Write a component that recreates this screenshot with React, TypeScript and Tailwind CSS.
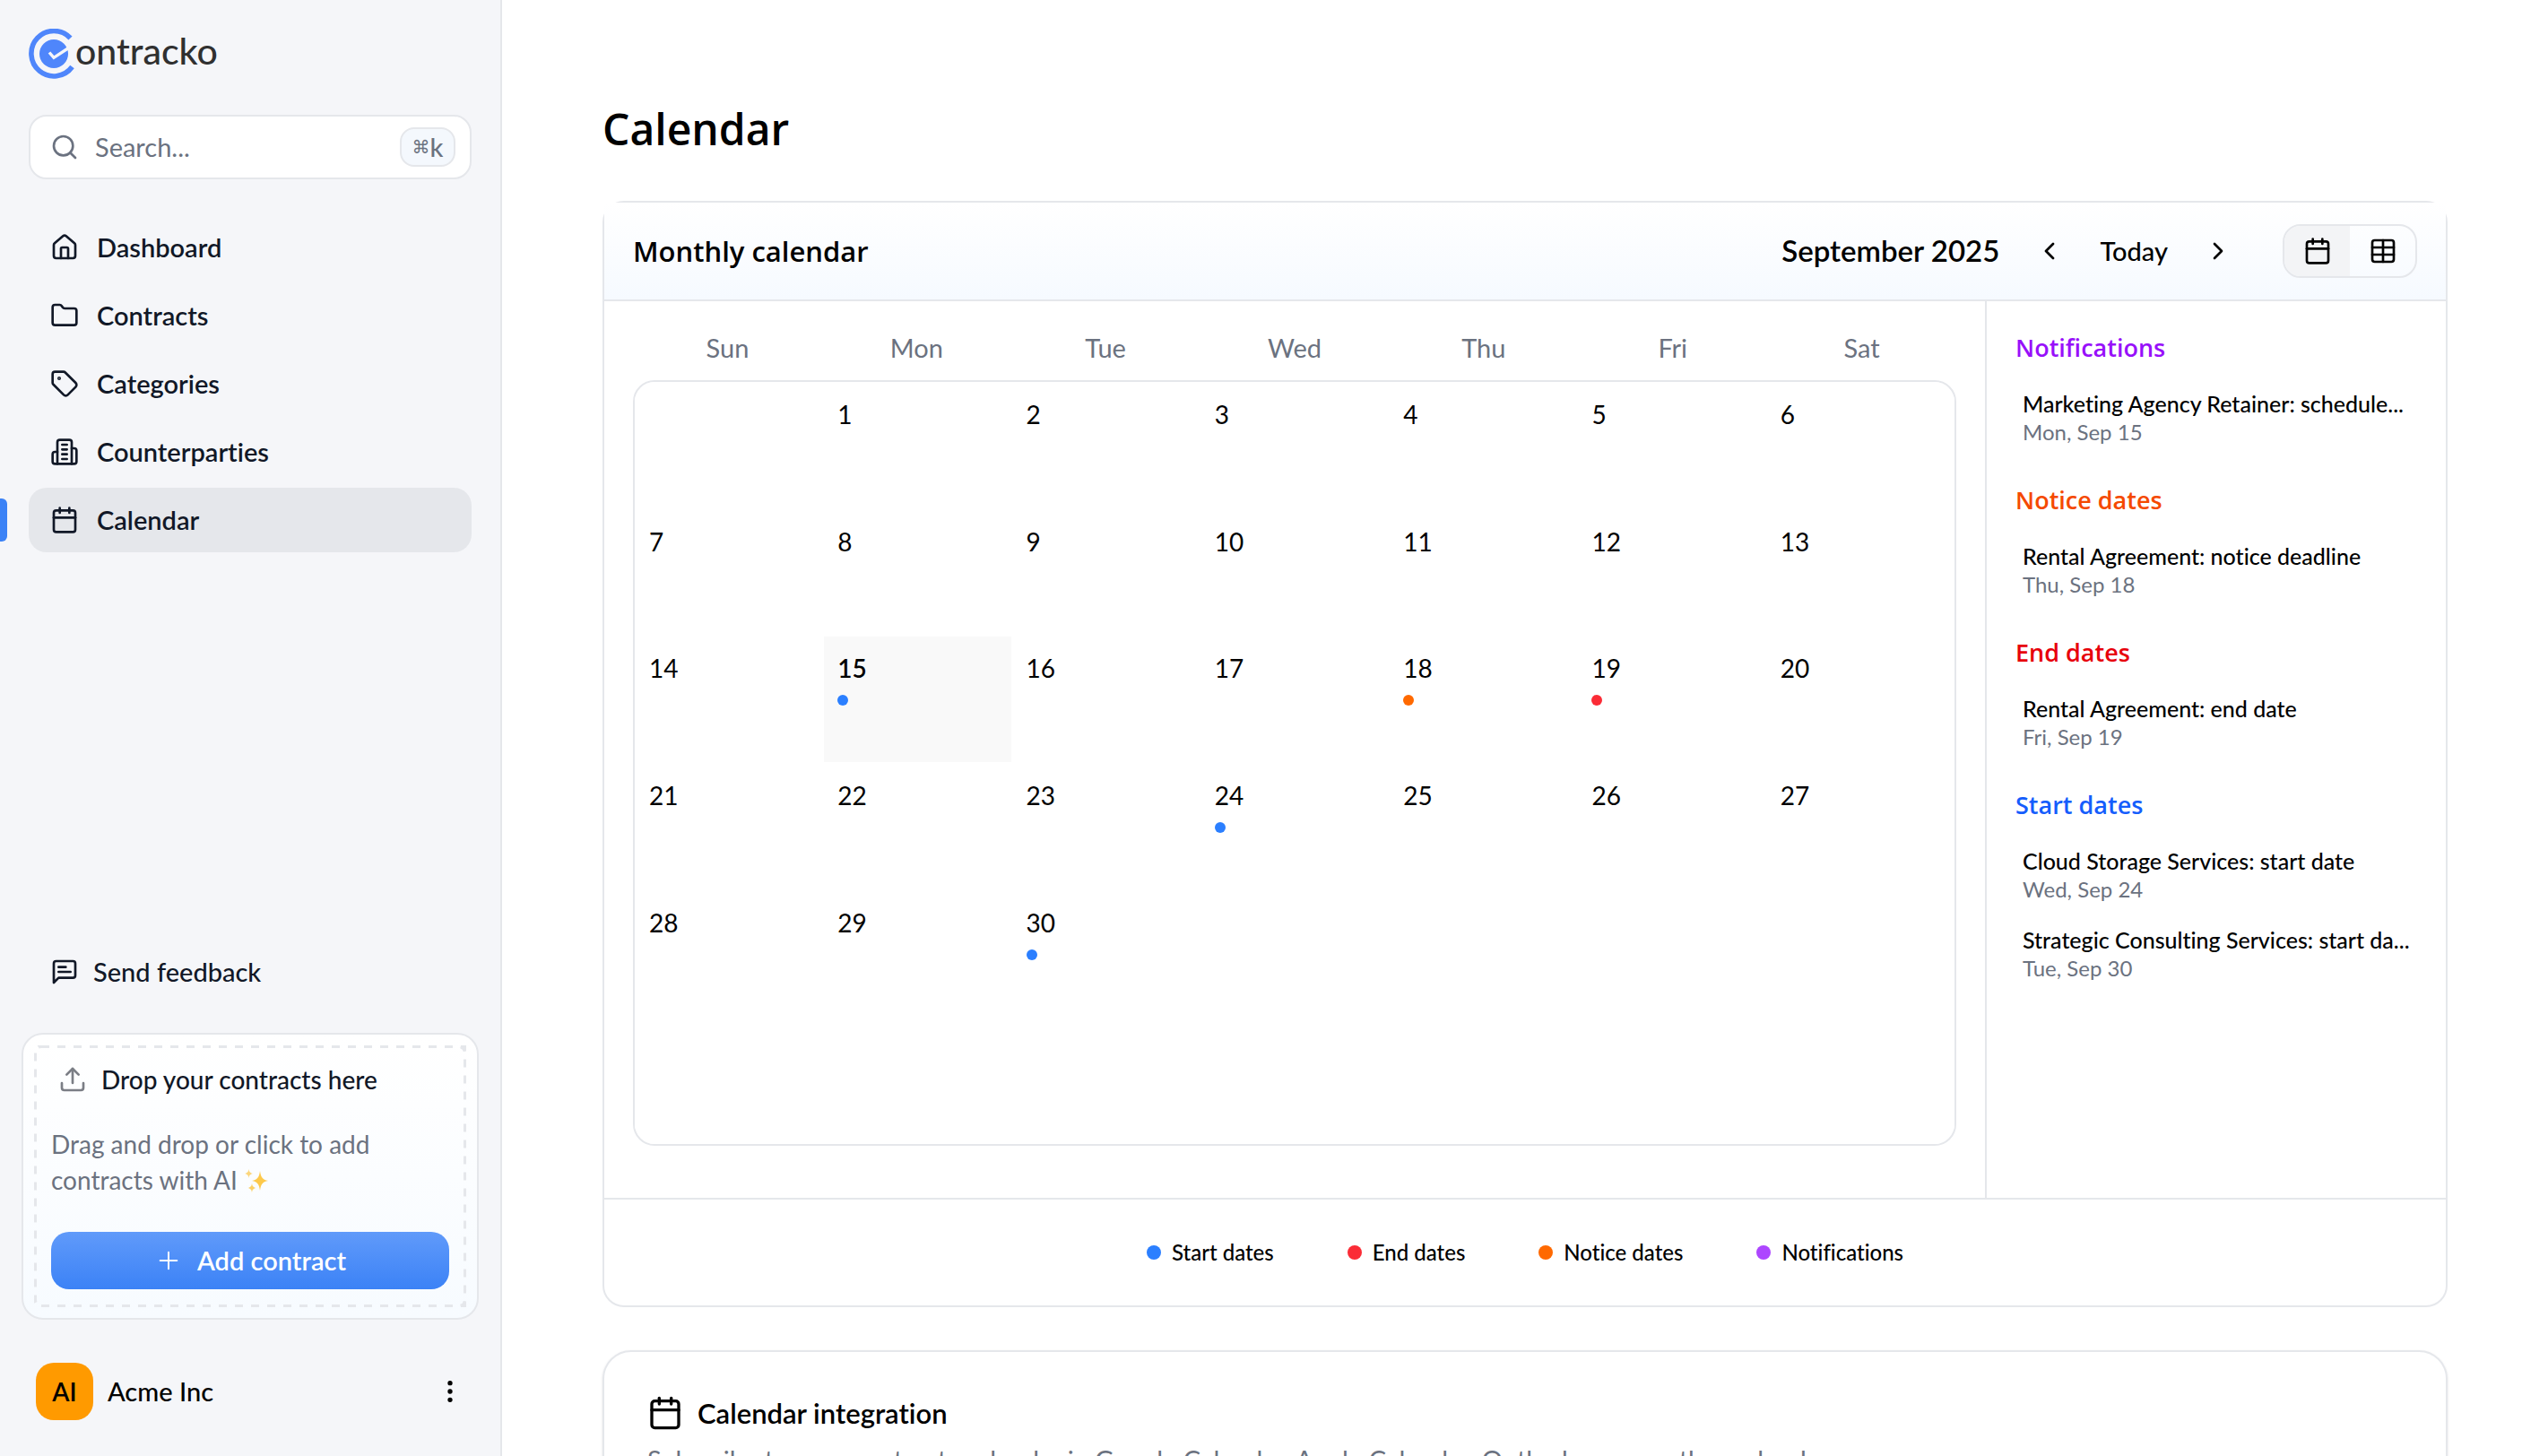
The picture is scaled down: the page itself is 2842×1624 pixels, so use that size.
import type { ReactNode } from "react";
import {
  Calendar,
  ChevronLeft,
  ChevronRight,
  EllipsisVertical,
  Folder,
  House,
  Plus,
  Search,
  Table,
  Tag,
  Upload,
} from "lucide-react";

function BuildingIcon({ className }: { className?: string }) {
  return (
    <svg viewBox="0 0 24 24" fill="none" stroke="currentColor" strokeWidth={2} strokeLinecap="round" strokeLinejoin="round" className={className} aria-hidden="true">
      <path d="M6 22V4a2 2 0 0 1 2-2h8a2 2 0 0 1 2 2v18Z" />
      <path d="M6 12H4a2 2 0 0 0-2 2v6a2 2 0 0 0 2 2h2" />
      <path d="M18 9h2a2 2 0 0 1 2 2v9a2 2 0 0 1-2 2h-2" />
      <path d="M10 6h4M10 10h4M10 14h4M10 18h4" />
    </svg>
  );
}

function FeedbackIcon({ className }: { className?: string }) {
  return (
    <svg viewBox="0 0 24 24" fill="none" stroke="currentColor" strokeWidth={2} strokeLinecap="round" strokeLinejoin="round" className={className} aria-hidden="true">
      <path d="M21 15a2 2 0 0 1-2 2H7l-4 4V5a2 2 0 0 1 2-2h14a2 2 0 0 1 2 2z" />
      <path d="M13 8H7M17 12H7" />
    </svg>
  );
}

function Sparkles() {
  return (
    <svg viewBox="0 0 28 28" className="inline-block size-7 align-[-4px]" role="img" aria-label="sparkles">
      <path d="M18 3c1 7 2.500 9.500 9 11-6.500 1.500-8 4-9 11-1-7-2.500-9.500-9-11 6.500-1.500 8-4 9-11z" fill="#fdc94b" />
      <path d="M5.500 1c.5 3 1.300 4.200 4.500 5-3.200.8-4 2-4.500 5C5 8 4.200 6.800 1 6c3.200-.8 4-2 4.500-5z" fill="#fbd67c" />
      <path d="M9 17c.5 3 1.300 4.200 4.500 5-3.200.8-4 2-4.500 5-.5-3-1.300-4.200-4.500-5 3.200-.8 4-2 4.500-5z" fill="#fbd067" />
    </svg>
  );
}

function Logo() {
  return (
    <a href="#home" aria-label="Contracko" className="flex h-14">
      <svg viewBox="0 0 52 56" className="h-14 w-[52px]" aria-hidden="true">
        <path d="M46.500 10.500A25.200 25.200 0 1 0 48.500 42.500" fill="none" stroke="#4f86fb" strokeWidth="5.600" />
        <circle cx="28" cy="28" r="16" fill="#4f86fb" />
        <path d="M23 26.500l5 5.800L46 20.500" fill="none" stroke="#f5f6f9" strokeWidth="3.400" />
      </svg>
      <span className="text-[41px] leading-[50px] font-medium text-[#303030]">ontracko</span>
    </a>
  );
}

const navItems: { label: string; icon: ReactNode; active?: boolean }[] = [
  { label: "Dashboard", icon: <House className="size-8" /> },
  { label: "Contracts", icon: <Folder className="size-8" /> },
  { label: "Categories", icon: <Tag className="size-8" /> },
  { label: "Counterparties", icon: <BuildingIcon className="size-8" /> },
  { label: "Calendar", icon: <Calendar className="size-8" />, active: true },
];

function Sidebar() {
  return (
    <aside className="flex w-[560px] shrink-0 flex-col border-r-2 border-[#e5e7eb] bg-[#f5f6f9] pt-8 pb-10 text-[#111827]">
      <div className="px-8">
        <Logo />
        <label className="mt-10 flex h-[72px] items-center rounded-[20px] border-2 border-[#e5e7eb] bg-white pr-4 pl-[22px] text-[#6b7280]">
          <Search className="size-8 shrink-0" />
          <input
            type="search"
            aria-label="Search"
            placeholder="Search..."
            className="ml-[18px] min-w-0 flex-1 bg-transparent text-[29px] outline-none placeholder:text-[#6b7280]"
          />
          <kbd className="flex h-11 w-[62px] items-center justify-center rounded-2xl border-2 border-[#e5e7eb] bg-[#f4f8fd] font-[inherit] text-[29px] font-medium">
            <span className="font-['DejaVu_Sans'] text-[20px]">⌘</span>k
          </kbd>
        </label>
      </div>

      <nav aria-label="Main" className="mt-10">
        <ul className="flex flex-col gap-1">
          {navItems.map((item) => (
            <li key={item.label} className="relative px-8">
              {item.active && <span className="absolute top-3 left-0 h-12 w-2 rounded-r-md bg-[#3b82f6]" />}
              <a
                href={`#${item.label.toLowerCase()}`}
                aria-current={item.active ? "page" : undefined}
                className={`flex h-[72px] items-center gap-5 rounded-[20px] px-6 text-[29px] font-semibold ${item.active ? "bg-[#e5e7eb]" : ""}`}
              >
                {item.icon}
                {item.label}
              </a>
            </li>
          ))}
        </ul>
      </nav>

      <button type="button" className="mx-8 mt-auto flex h-[72px] items-center gap-4 px-6 text-[29px] font-medium">
        <FeedbackIcon className="size-8" />
        Send feedback
      </button>

      <section className="relative mx-6 mt-8 rounded-3xl border-2 border-[#e5e7eb] bg-linear-to-b from-white to-[#f7fbff] px-[31px] pt-[30px] pb-8">
        <svg className="pointer-events-none absolute inset-3 h-[calc(100%-24px)] w-[calc(100%-24px)]" aria-hidden="true">
          <rect x="0" y="0" width="100%" height="100%" rx="8" fill="none" stroke="#e5e7eb" strokeWidth="6" strokeDasharray="9 9" />
        </svg>
        <h2 className="flex h-10 items-center gap-4 pl-2 text-[28px] font-medium">
          <Upload className="size-8 text-[#7b7e85]" />
          Drop your contracts here
        </h2>
        <p className="mt-8 text-[28px] leading-10 text-[#6b7280]">
          Drag and drop or click to add contracts with AI <Sparkles />
        </p>
        <button
          type="button"
          className="mt-[38px] flex h-16 w-full items-center justify-center gap-4 rounded-[20px] bg-linear-to-b from-[#609afa] to-[#3b82f6] text-[29px] font-semibold text-white"
        >
          <Plus className="size-8" strokeWidth={1.5} />
          Add contract
        </button>
      </section>

      <div className="mt-12 flex items-center pr-10 pl-10 text-black">
        <span className="flex size-16 items-center justify-center rounded-[20px] bg-[#ff9a00] text-[28px] font-semibold">AI</span>
        <span className="ml-4 text-[29px] font-medium">Acme Inc</span>
        <button type="button" aria-label="Account menu" className="ml-auto">
          <EllipsisVertical className="size-8" />
        </button>
      </div>
    </aside>
  );
}

const weekdays = ["Sun", "Mon", "Tue", "Wed", "Thu", "Fri", "Sat"];

const markers: Record<number, string> = {
  15: "bg-[#2b7fff]",
  18: "bg-[#ff6900]",
  19: "bg-[#fb2c36]",
  24: "bg-[#2b7fff]",
  30: "bg-[#2b7fff]",
};

const weeks = Array.from({ length: 6 }, (_, w) =>
  Array.from({ length: 7 }, (_, d) => {
    const day = w * 7 + d;
    return day >= 1 && day <= 30 ? day : null;
  }),
);

function MonthGrid() {
  return (
    <table className="block">
      <thead className="block">
        <tr className="grid grid-cols-7">
          {weekdays.map((d) => (
            <th key={d} scope="col" className="text-[29px] leading-10 font-normal text-[#6b7280]">
              {d}
            </th>
          ))}
        </tr>
      </thead>
      <tbody className="mt-4 grid h-[854px] grid-rows-6 overflow-hidden rounded-3xl border-2 border-[#e5e7eb]">
        {weeks.map((week, w) => (
          <tr key={w} className="grid grid-cols-7">
            {week.map((day, d) => (
              <td
                key={d}
                className={`border-x border-y border-white px-[15px] pt-[15px] text-[28px] leading-10 ${day === 15 ? "bg-[#f9f9f9] font-semibold" : ""}`}
              >
                {day}
                {day !== null && markers[day] && <span className={`mt-2.5 block size-3 rounded-full ${markers[day]}`} />}
              </td>
            ))}
          </tr>
        ))}
      </tbody>
    </table>
  );
}

const groups = [
  {
    title: "Notifications",
    color: "text-[#9810fa]",
    items: [["Marketing Agency Retainer: schedule...", "Mon, Sep 15"]],
  },
  {
    title: "Notice dates",
    color: "text-[#f54900]",
    items: [["Rental Agreement: notice deadline", "Thu, Sep 18"]],
  },
  {
    title: "End dates",
    color: "text-[#e7000b]",
    items: [["Rental Agreement: end date", "Fri, Sep 19"]],
  },
  {
    title: "Start dates",
    color: "text-[#155dfc]",
    items: [
      ["Cloud Storage Services: start date", "Wed, Sep 24"],
      ["Strategic Consulting Services: start da...", "Tue, Sep 30"],
    ],
  },
];

const legend = [
  ["Start dates", "bg-[#2b7fff]"],
  ["End dates", "bg-[#fb2c36]"],
  ["Notice dates", "bg-[#ff6900]"],
  ["Notifications", "bg-[#ad46ff]"],
];

function CalendarCard() {
  return (
    <section className="rounded-3xl border-2 border-[#e5e7eb]">
      <header className="flex h-[110px] items-center border-b-2 border-[#e5e7eb] bg-linear-to-b from-white to-[#f6faff] px-8">
        <h2 className="font-['Open_Sans',sans-serif] text-[31px] font-semibold">Monthly calendar</h2>
        <span className="ml-auto text-[33px] font-semibold">September 2025</span>
        <button type="button" aria-label="Previous month" className="ml-8 flex size-12 items-center justify-center">
          <ChevronLeft className="size-8" />
        </button>
        <button type="button" className="mx-8 text-[29px] font-medium">
          Today
        </button>
        <button type="button" aria-label="Next month" className="flex size-12 items-center justify-center">
          <ChevronRight className="size-8" />
        </button>
        <div className="ml-12 flex h-[60px] w-[150px] overflow-hidden rounded-[20px] border-2 border-[#e5e7eb]">
          <button type="button" aria-label="Calendar view" aria-pressed="true" className="flex flex-1 items-center justify-center bg-[#f3f4f6]">
            <Calendar className="size-8" />
          </button>
          <button type="button" aria-label="Table view" aria-pressed="false" className="flex flex-1 items-center justify-center">
            <Table className="size-8" />
          </button>
        </div>
      </header>

      <div className="flex">
        <div className="min-w-0 flex-1 px-8 pt-8 pb-[58px]">
          <MonthGrid />
        </div>
        <div className="flex w-[514px] shrink-0 flex-col gap-[30px] border-l-2 border-[#e5e7eb] py-8 pr-6 pl-8">
          {groups.map((g) => (
            <section key={g.title}>
              <h3 className={`font-['Open_Sans',sans-serif] text-[27px] leading-10 font-semibold ${g.color}`}>{g.title}</h3>
              <ul className="mt-5 flex flex-col gap-2">
                {g.items.map(([title, date]) => (
                  <li key={title} className="px-2 pt-1.5 pb-2.5">
                    <p className="text-[25px] leading-8 font-medium whitespace-nowrap">{title}</p>
                    <p className="text-2xl leading-8 text-[#6b7280]">{date}</p>
                  </li>
                ))}
              </ul>
            </section>
          ))}
        </div>
      </div>

      <ul className="flex h-[120px] items-center justify-center gap-[82px] border-t-2 border-[#e5e7eb] text-2xl font-medium">
        {legend.map(([label, dot]) => (
          <li key={label} className="flex items-center gap-3">
            <span className={`size-4 rounded-full ${dot}`} />
            {label}
          </li>
        ))}
      </ul>
    </section>
  );
}

function IntegrationCard() {
  return (
    <section className="mt-12 rounded-[32px] border-2 border-[#e5e7eb] px-12 py-12 shadow-sm">
      <h2 className="flex h-10 items-center gap-4 text-[31px] font-semibold">
        <Calendar className="size-10" />
        Calendar integration
      </h2>
      <p className="mt-3 text-[29px] leading-10 text-[#6b7280]">
        Subscribe to your contracts calendar in Google Calendar, Apple Calendar, Outlook, or any other calendar app.
      </p>
    </section>
  );
}

export default function App() {
  return (
    <div className="flex h-screen overflow-hidden bg-white font-[Lato,sans-serif] text-black [font-variant-ligatures:none]">
      <Sidebar />
      <main className="min-w-0 flex-1 overflow-y-auto px-28 pt-28 [scrollbar-width:none]">
        <h1 className="mb-12 font-['Open_Sans',sans-serif] text-5xl leading-[64px] font-semibold">Calendar</h1>
        <CalendarCard />
        <IntegrationCard />
      </main>
    </div>
  );
}
